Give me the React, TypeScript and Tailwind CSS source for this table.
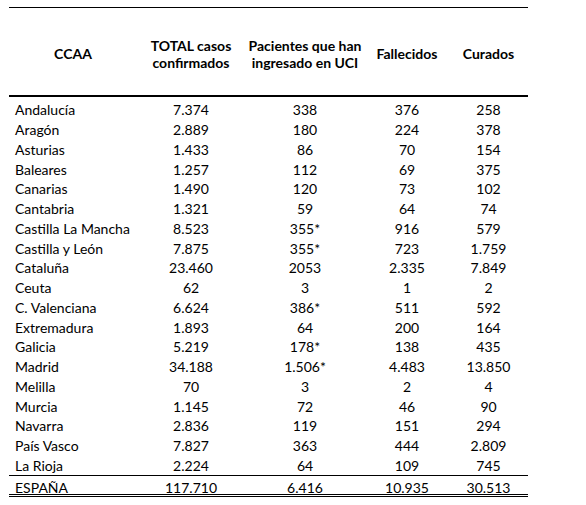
import React from "react";

const rows: [string, string, string, string, string][] = [
  ["Andalucía", "7.374", "338", "376", "258"],
  ["Aragón", "2.889", "180", "224", "378"],
  ["Asturias", "1.433", "86", "70", "154"],
  ["Baleares", "1.257", "112", "69", "375"],
  ["Canarias", "1.490", "120", "73", "102"],
  ["Cantabria", "1.321", "59", "64", "74"],
  ["Castilla La Mancha", "8.523", "355*", "916", "579"],
  ["Castilla y León", "7.875", "355*", "723", "1.759"],
  ["Cataluña", "23.460", "2053", "2.335", "7.849"],
  ["Ceuta", "62", "3", "1", "2"],
  ["C. Valenciana", "6.624", "386*", "511", "592"],
  ["Extremadura", "1.893", "64", "200", "164"],
  ["Galicia", "5.219", "178*", "138", "435"],
  ["Madrid", "34.188", "1.506*", "4.483", "13.850"],
  ["Melilla", "70", "3", "2", "4"],
  ["Murcia", "1.145", "72", "46", "90"],
  ["Navarra", "2.836", "119", "151", "294"],
  ["País Vasco", "7.827", "363", "444", "2.809"],
  ["La Rioja", "2.224", "64", "109", "745"],
];

function Row({ cells, className = "" }: { cells: string[]; className?: string }) {
  return (
    <div className={`flex items-center ${className}`}>
      <div className="w-[128px] pl-[6px]">{cells[0]}</div>
      <div className="w-[108px] text-center">{cells[1]}</div>
      <div className="w-[120px] text-center">{cells[2]}</div>
      <div className="w-[84px] text-center">{cells[3]}</div>
      <div className="w-[79px] text-center">{cells[4]}</div>
    </div>
  );
}

export default function App() {
  return (
    <div
      className="w-[586px] h-[505px] bg-white text-black pt-[7px] pl-[9px] text-[14px]"
      style={{ fontFamily: "Lato, 'Liberation Sans', sans-serif" }}
    >
      <div className="w-[519px]">
        {/* Header */}
        <div className="flex items-center h-[90px] border-t border-black border-b-2 font-bold leading-[17px] pt-[4px]">
          <div className="w-[128px] text-center">CCAA</div>
          <div className="w-[108px] text-center">
            TOTAL casos
            <br />
            confirmados
          </div>
          <div className="w-[120px] text-center whitespace-nowrap">
            Pacientes que han
            <br />
            ingresado en UCI
          </div>
          <div className="w-[84px] text-center">Fallecidos</div>
          <div className="w-[79px] text-center">Curados</div>
        </div>

        {/* Body */}
        <div className="pt-[3px] border-b border-black">
          {rows.map((r) => (
            <Row key={r[0]} cells={r} className="h-[19.75px]" />
          ))}
        </div>

        {/* Total */}
        <Row
          cells={["ESPAÑA", "117.710", "6.416", "10.935", "30.513"]}
          className="h-[21px] pt-[5px] border-b-[3px] border-double border-black"
        />
      </div>
    </div>
  );
}
